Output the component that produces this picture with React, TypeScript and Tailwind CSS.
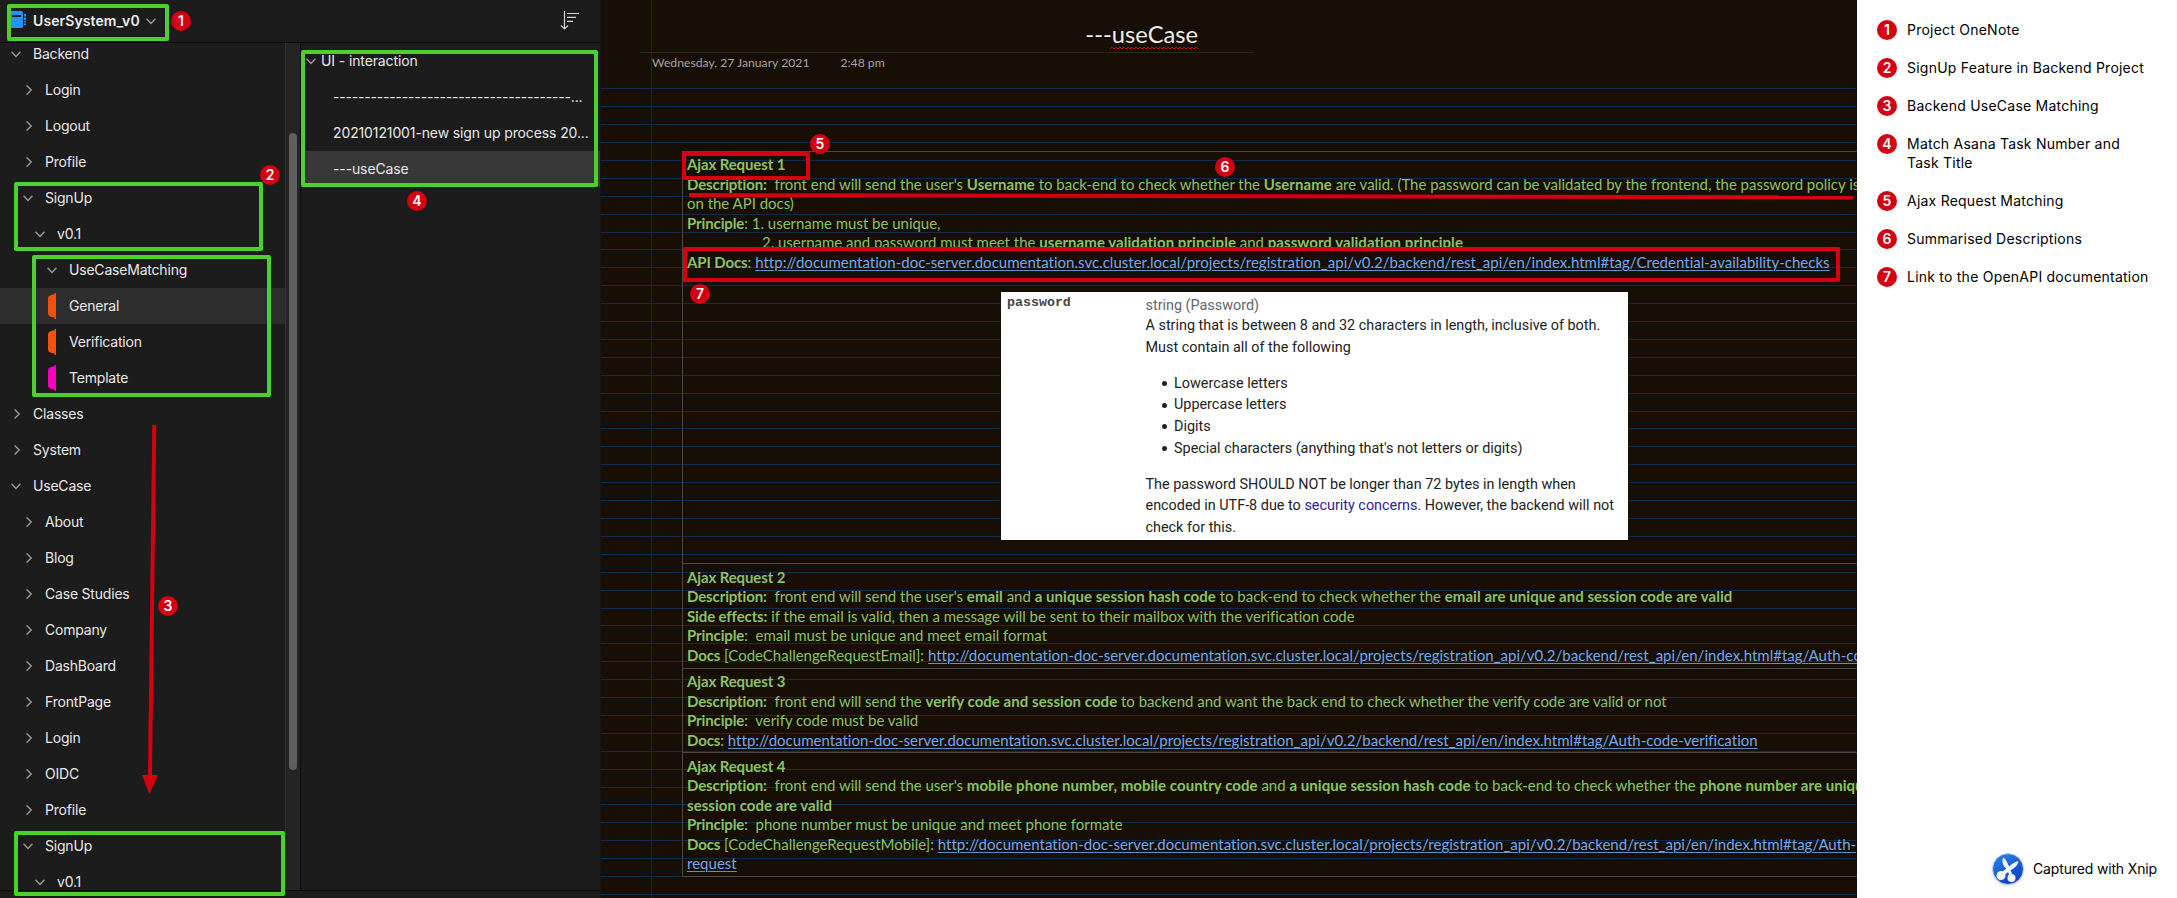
import React from "react";

type Row = { label: string; level: 0 | 1 | 2 | 3; kind: "open" | "closed" | "section"; color?: string; active?: boolean };

const tree: Row[] = [
  { label: "Backend", level: 0, kind: "open" },
  { label: "Login", level: 1, kind: "closed" },
  { label: "Logout", level: 1, kind: "closed" },
  { label: "Profile", level: 1, kind: "closed" },
  { label: "SignUp", level: 1, kind: "open" },
  { label: "v0.1", level: 2, kind: "open" },
  { label: "UseCaseMatching", level: 3, kind: "open" },
  { label: "General", level: 3, kind: "section", color: "text-[#f1500f]", active: true },
  { label: "Verification", level: 3, kind: "section", color: "text-[#f1500f]" },
  { label: "Template", level: 3, kind: "section", color: "text-[#f800c0]" },
  { label: "Classes", level: 0, kind: "closed" },
  { label: "System", level: 0, kind: "closed" },
  { label: "UseCase", level: 0, kind: "open" },
  { label: "About", level: 1, kind: "closed" },
  { label: "Blog", level: 1, kind: "closed" },
  { label: "Case Studies", level: 1, kind: "closed" },
  { label: "Company", level: 1, kind: "closed" },
  { label: "DashBoard", level: 1, kind: "closed" },
  { label: "FrontPage", level: 1, kind: "closed" },
  { label: "Login", level: 1, kind: "closed" },
  { label: "OIDC", level: 1, kind: "closed" },
  { label: "Profile", level: 1, kind: "closed" },
  { label: "SignUp", level: 1, kind: "open" },
  { label: "v0.1", level: 2, kind: "open" },
];

const indent = ["pl-[9px]", "pl-[21px]", "pl-[33px]", "pl-[45px]"];

function Chevron({ open }: { open: boolean }) {
  return (
    <svg width="14" height="14" viewBox="0 0 14 14" fill="none" stroke="#9a9a9a" strokeWidth="1.4" className="shrink-0">
      <path d={open ? "M2.6 4.8 7 9.4 11.4 4.8" : "M5.6 2.6 10.2 7 5.6 11.4"} />
    </svg>
  );
}

function TreeRow({ row }: { row: Row }) {
  return (
    <div className={`flex h-9 shrink-0 items-center ${indent[row.level]} ${row.active ? "bg-[#2d2d2d]" : ""}`}>
      {row.kind === "section" ? (
        <svg width="14" height="26" viewBox="0 0 14 26" fill="currentColor" className={`shrink-0 ${row.color}`}>
          <path d="M11 0H9.500V1.600C5.500 1.800 3 3 3 6v14c0 3 2.500 4.200 6.500 4.400V26H11z" />
        </svg>
      ) : (
        <Chevron open={row.kind === "open"} />
      )}
      <span className="ml-2.5 text-[14px] leading-5 tracking-[-0.2px] text-[#e8e8e8]">{row.label}</span>
    </div>
  );
}

function Badge({ n, className = "" }: { n: number; className?: string }) {
  return (
    <span className={`flex size-5 shrink-0 items-center justify-center rounded-full bg-[#d40011] text-[14px] leading-5 font-semibold text-white ${className}`}>
      {n}
    </span>
  );
}

function Line({ children, className = "" }: { children: React.ReactNode; className?: string }) {
  return <p className={`h-[19.5px] tracking-[-0.02px] whitespace-pre ${className}`}>{children}</p>;
}

function Label({ children }: { children: React.ReactNode }) {
  return <b className="font-bold tracking-[-0.12px]">{children}</b>;
}

function B({ children }: { children: React.ReactNode }) {
  return <b className="font-bold tracking-[0.05px]">{children}</b>;
}

function Url({ children }: { children: React.ReactNode }) {
  return (
    <span className="tracking-[0.015px] text-[#72a9ee] underline decoration-[#5a8fd0] decoration-1 underline-offset-2">{children}</span>
  );
}

const host = "http://documentation-doc-server.documentation.svc.cluster.local/projects/registration_api/v0.2/backend/rest_api/en/index.html#tag/";

const shortRules = [9, 19, 30, 40];

function Ruling() {
  return (
    <div className="absolute inset-0 flex flex-col overflow-hidden pt-[71px]">
      {Array.from({ length: 46 }, (_, i) => (
        <div key={i} className={`shrink-0 border-b border-[#102c4a] ${shortRules.includes(i) ? "h-[17px]" : "h-[18px]"}`} />
      ))}
      <div className="absolute inset-y-0 left-[50px] w-px bg-[#6d0303]" />
    </div>
  );
}

function PasswordCard() {
  return (
    <div className="absolute top-[292px] left-[400px] flex h-[248px] w-[627px] bg-white pt-[6px] pl-[6px] font-['Roboto',sans-serif] text-[14.4px] leading-[21.6px] text-[#222]">
      <div className="w-[138.500px] shrink-0 font-['Liberation_Mono',monospace] text-[13.3px] leading-[10px] font-bold text-[#444]">password</div>
      <div className="whitespace-nowrap">
        <p className="h-[17px] leading-[15px] text-[#666]">string (Password)</p>
        <p>A string that is between 8 and 32 characters in length, inclusive of both.</p>
        <p>Must contain all of the following</p>
        <ul className="mt-[14.600px] mb-[14.400px]">
          {["Lowercase letters", "Uppercase letters", "Digits", "Special characters (anything that's not letters or digits)"].map((t) => (
            <li key={t} className="flex items-center pl-4">
              <span className="mr-[7.500px] size-[5px] rounded-full bg-[#222]" />
              {t}
            </li>
          ))}
        </ul>
        <p>The password SHOULD NOT be longer than 72 bytes in length when</p>
        <p>encoded in UTF-8 due to <span className="text-[#2a2396]">security concerns</span>. However, the backend will not</p>
        <p>check for this.</p>
      </div>
    </div>
  );
}

function Note() {
  return (
    <main className="relative w-[1256px] shrink-0 overflow-hidden bg-[#170e05] font-['Lato',sans-serif] text-[#8cc168]">
      <Ruling />
      <div className="relative flex h-[151px] flex-col">
        <div className="ml-[39px] flex h-[53px] w-[614px] justify-end border-b border-[#2b2724] pt-[18px]">
          <h1 className="relative mr-[56px] h-[32px] text-[23.700px] leading-[32px] whitespace-nowrap text-[#efece8]">
            ---useCase
            <svg width="88" height="4" viewBox="0 0 88 4" className="absolute right-0 bottom-0" fill="none" stroke="#d00000">
              <path d={"M0 3" + Array.from({ length: 22 }, () => "l2-2 2 2").join("")} />
            </svg>
          </h1>
        </div>
        <div className="flex gap-[31px] pt-px pl-[51px] text-[12.200px] leading-[18px] text-[#a8a49f]">
          <span>Wednesday, 27 January 2021</span>
          <span>2:48 pm</span>
        </div>
      </div>
      <div className="relative ml-[81px] flex w-[1300px] flex-col border-t border-l border-[#4b4744] text-[15px] leading-[19.500px]">
        <section className="h-[412px] border-b border-[#4b4744] pt-[3px] pl-[4px]">
          <Line><Label>Ajax Request 1</Label></Line>
          <Line><Label>Description:</Label>  front end will send the user's <B>Username</B> to back-end to check whether the <B>Username</B> are valid. (The password can be validated by the frontend, the password policy is</Line>
          <Line>on the API docs)</Line>
          <Line><Label>Principle</Label>: 1. username must be unique,</Line>
          <Line className="pl-[75px]">2. username and password must meet the <B>username validation principle</B> and <B>password validation principle</B></Line>
          <Line><Label>API Docs</Label>: <Url>{host}Credential-availability-checks</Url></Line>
        </section>
        <section className="h-[105px] border-b border-[#4b4744] pt-[3.500px] pl-[4px]">
          <Line><Label>Ajax Request 2</Label></Line>
          <Line><Label>Description:</Label>  front end will send the user's <B>email</B> and <B>a unique session hash code</B> to back-end to check whether the <B>email are unique and session code are valid</B></Line>
          <Line><Label>Side effects:</Label> if the email is valid, then a message will be sent to their mailbox with the verification code</Line>
          <Line><Label>Principle</Label>:  email must be unique and meet email format</Line>
          <Line><Label>Docs</Label> [CodeChallengeRequestEmail]: <Url>{host}Auth-co</Url></Line>
        </section>
        <section className="h-[84px] border-b border-[#4b4744] pt-[3px] pl-[4px]">
          <Line><Label>Ajax Request 3</Label></Line>
          <Line><Label>Description:</Label>  front end will send the <B>verify code and session code</B> to backend and want the back end to check whether the verify code are valid or not</Line>
          <Line><Label>Principle</Label>:  verify code must be valid</Line>
          <Line><Label>Docs</Label>: <Url>{host}Auth-code-verification</Url></Line>
        </section>
        <section className="h-[124px] border-b border-[#4b4744] pt-[3.500px] pl-[4px]">
          <Line><Label>Ajax Request 4</Label></Line>
          <Line><Label>Description:</Label>  front end will send the user's <B>mobile phone number, mobile country code</B> and <B>a unique session hash code</B> to back-end to check whether the <B>phone number are uniqu</B></Line>
          <Line><B>session code are valid</B></Line>
          <Line><Label>Principle</Label>:  phone number must be unique and meet phone formate</Line>
          <Line><Label>Docs</Label> [CodeChallengeRequestMobile]: <Url>{host}Auth-</Url></Line>
          <Line><Url>request</Url></Line>
        </section>
      </div>
      <PasswordCard />
    </main>
  );
}

const legend = [
  "Project OneNote",
  "SignUp Feature in Backend Project",
  "Backend UseCase Matching",
  "Match Asana Task Number and Task Title",
  "Ajax Request Matching",
  "Summarised Descriptions",
  "Link to the OpenAPI documentation",
];

function Legend() {
  return (
    <aside className="flex flex-1 flex-col bg-white pt-5 pl-5 text-black">
      <ol className="flex flex-col gap-[19px]">
        {legend.map((t, i) => (
          <li key={t} className="flex items-start gap-[10px]">
            <Badge n={i + 1} className="-mb-px" />
            <span className="w-[246px] text-[14px] leading-[19px] tracking-[0.23px]">{t}</span>
          </li>
        ))}
      </ol>
      <div className="mt-auto mb-[13px] flex items-center gap-[9px] pl-[115px]">
        <svg width="32" height="32" viewBox="0 0 32 32" className="rounded-full drop-shadow">
          <defs>
            <linearGradient id="xnip" x1="0" y1="0" x2="0.6" y2="1">
              <stop offset="0" stopColor="#2b86ee" />
              <stop offset="1" stopColor="#0f3fc4" />
            </linearGradient>
          </defs>
          <circle cx="16" cy="16" r="15.500" fill="url(#xnip)" stroke="#c9d3e6" />
          <g fill="#f1f3f6">
            <path d="M11.500 4.500C9.500 8 10.500 12 14 15.500L17.500 22l2.500-1.500-2.500-6C15.500 10 14 6.500 11.500 4.500z" />
            <path d="M26.500 8C22 9 18.500 12 15.500 15L9 19.500l2 3.500 6.500-5C22 15.500 26 12.500 26.500 8z" />
            <circle cx="9" cy="22.500" r="4.500" />
            <circle cx="19.500" cy="25" r="4" />
          </g>
        </svg>
        <span className="text-[14px] leading-5 tracking-[-0.15px]">Captured with Xnip</span>
      </div>
    </aside>
  );
}

const frame = "absolute rounded-[2px] border-4 border-[#4bd02d]";
const redFrame = "absolute rounded-[1px] border-4 border-[#d40011]";

function Annotations() {
  return (
    <div className="pointer-events-none absolute inset-0">
      <div className={`${frame} top-[4px] left-[7px] h-[37px] w-[162px]`} />
      <div className={`${frame} top-[182px] left-[14px] h-[69px] w-[249px]`} />
      <div className={`${frame} top-[255px] left-[32px] h-[142px] w-[239px]`} />
      <div className={`${frame} top-[50px] left-[301px] h-[137px] w-[297px]`} />
      <div className={`${frame} top-[831px] left-[14px] h-[65px] w-[271px]`} />
      <div className={`${redFrame} top-[152px] left-[682px] h-[28px] w-[128px]`} />
      <div className={`${redFrame} top-[247px] left-[683px] h-[35px] w-[1157px]`} />
      <svg width="2177" height="898" className="absolute inset-0" fill="#d40011">
        <path d="M689 193 1853 195.300v4.200L689 197z" />
        <path d="M152.300 425h4L152 775h6L149.500 794 142 775h6z" />
      </svg>
      <Badge n={1} className="absolute top-[11px] left-[171px]" />
      <Badge n={2} className="absolute top-[165px] left-[260px]" />
      <Badge n={3} className="absolute top-[596px] left-[158px]" />
      <Badge n={4} className="absolute top-[191px] left-[407px]" />
      <Badge n={5} className="absolute top-[134px] left-[810px]" />
      <Badge n={6} className="absolute top-[157px] left-[1215px]" />
      <Badge n={7} className="absolute top-[284px] left-[690px]" />
    </div>
  );
}

export default function App() {
  return (
    <div className="relative flex h-[898px] w-[2177px] overflow-hidden bg-[#1c1c1c] font-['Inter',sans-serif]">
      <div className="flex w-[601px] shrink-0 flex-col border-r border-[#10161c]">
        <header className="flex h-[43px] shrink-0 items-center border-b border-[#0c0c0c] pr-[20px] pl-[11px]">
          <svg width="16" height="18" viewBox="0 0 16 18" fill="#2492ff" className="-mt-[3px]">
            <path d="M0 0h10.500Q12 0 12 1.500v14Q12 17 10.500 17H0z" />
            <path d="M1 4h9v2H1z" fill="#1c1c1c" />
            <path d="M13 3h2v2.500h-2zM13 6.500h2V9h-2zM13 10h2v1.500h-2zM13 12.500h2V14h-2z" />
          </svg>
          <h2 className="ml-[6px] text-[14px] leading-5 font-semibold tracking-[0.1px] text-[#ececec]">UserSystem_v0</h2>
          <span className="ml-1"><Chevron open /></span>
          <svg width="20" height="20" viewBox="0 0 20 20" fill="none" stroke="#d2d2d2" strokeWidth="1.200" className="ml-auto">
            <path d="M4.500 0v18M1 14.500 4.500 18 8 14.500M7 2.500h12M7 6.400h9M7 10.400h6" />
          </svg>
        </header>
        <div className="flex h-[847px] shrink-0">
          <nav className="flex w-[286px] flex-col overflow-hidden border-r border-[#333]">
            <div className="-mt-[7px] flex flex-col">
              {tree.map((row, i) => (
                <TreeRow key={i} row={row} />
              ))}
            </div>
          </nav>
          <div className="w-[15px] border-r border-[#0c0c0c] bg-[#242424] pt-[90px] pl-[3px]">
            <div className="h-[637px] w-2 rounded-full bg-[#5e5e5e]" />
          </div>
          <div className="flex flex-1 flex-col text-[14px] leading-9 tracking-[-0.12px] whitespace-nowrap text-[#e8e8e8]">
            <div className="flex h-9 items-center gap-[3px] pl-[3px]"><Chevron open />UI - interaction</div>
            <div className="h-9 pl-[32px] tracking-[-0.18px]">--------------------------------------...</div>
            <div className="h-9 pl-[32px]">20210121001-new sign up process 20...</div>
            <div className="h-9 bg-[#373737] pl-[32px]">---useCase</div>
          </div>
        </div>
        <div className="flex-1 border-t border-[#0c0c0c]" />
      </div>
      <Note />
      <Legend />
      <Annotations />
    </div>
  );
}
